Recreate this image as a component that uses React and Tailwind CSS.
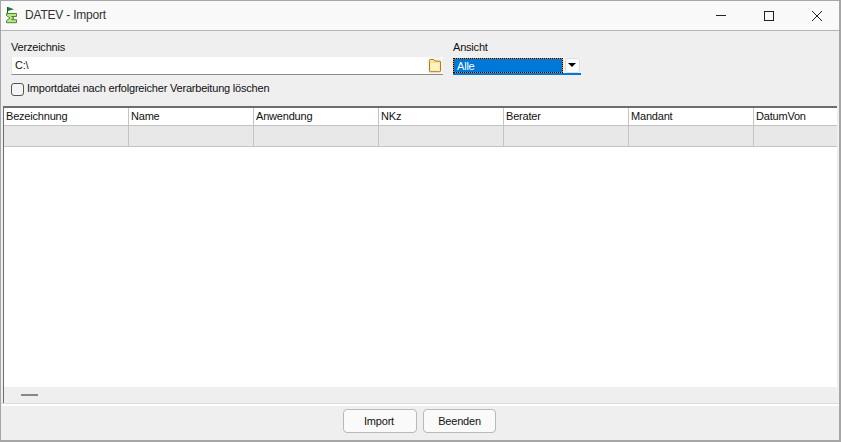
import React from 'react';

const columns = ['Bezeichnung', 'Name', 'Anwendung', 'NKz', 'Berater', 'Mandant', 'DatumVon'];

function AppIcon() {
  return (
    <svg width="16" height="20" viewBox="0 0 16 20" className="shrink-0">
      <path d="M3.5 1v6" stroke="#1c5a2a" strokeWidth="1" />
      <path d="M4 1l6 2.2L4 5z" fill="#1d7a35" />
      <path d="M2.5 7.5h10v3h-5l2.5 1.6-2.5 1.6h5v3h-10v-2l3.5-2.6-3.5-2.6z" fill="#b4ec7c" stroke="#55803f" strokeWidth="1" />
    </svg>
  );
}

function FolderIcon() {
  return (
    <svg width="14" height="15" viewBox="0 0 14 15">
      <path d="M1.5 3.5V2.3c0-.5.3-.8.8-.8h3.4l1.3 1.6h4.7c.5 0 .8.3.8.8v9c0 .5-.3.8-.8.8H2.3c-.5 0-.8-.3-.8-.8z" fill="#f8e391" stroke="#a98016" strokeWidth="1" />
      <path d="M2.5 5h9v7.5h-9z" fill="#fff3c4" />
    </svg>
  );
}

export default function App() {
  return (
    <div className="w-[841px] h-[442px] flex flex-col bg-[#efefef] border border-[#a6a6a6] border-r-2 border-b-2 text-[11px] tracking-[-0.2px] text-[#111] font-['Liberation_Sans',sans-serif] overflow-hidden">
      <div className="h-[30px] shrink-0 flex items-center bg-[#f9f9f9] border-b border-[#b5b5b5]">
        <div className="pl-[3px] w-[24px]">
          <AppIcon />
        </div>
        <span className="text-[12px] leading-[14px] tracking-[-0.2px] text-[#333] -mt-[1px]">DATEV - Import</span>
        <div className="ml-auto flex items-center gap-[38px] pr-[17px] h-full">
          <div className="w-[10px] h-px bg-[#222]" />
          <div className="w-[10px] h-[10px] border border-[#222]" />
          <svg width="10" height="10" viewBox="0 0 10 10">
            <path d="M0 0l10 10M10 0L0 10" stroke="#222" strokeWidth="1" />
          </svg>
        </div>
      </div>

      <div className="h-[75px] shrink-0 flex pl-[10px] pt-[9px]">
        <div className="w-[442px] flex flex-col">
          <div className="h-[16px] leading-[14px]">Verzeichnis</div>
          <div className="h-[18px] w-[432px] mt-[1px] flex items-center bg-white border-l border-[#e6e6e6] border-b-[#8c8c8c] border-b pl-[3px]">
            <span>C:\</span>
            <div className="ml-auto h-full w-[16px] flex items-center justify-center bg-[#f4f4f4] rounded-[3px]">
              <FolderIcon />
            </div>
          </div>
          <label className="flex items-center mt-[6px] h-[16px]">
            <span className="w-[13px] h-[13px] rounded-[3px] border border-[#555] bg-[#f4f4f4] mr-[3px]" />
            <span className="-mt-[1px]">Importdatei nach erfolgreicher Verarbeitung löschen</span>
          </label>
        </div>
        <div className="w-[128px] flex flex-col">
          <div className="h-[16px] leading-[14px]">Ansicht</div>
          <div className="h-[18px] mt-[1px] flex items-end bg-[#f2f2f2] border-b-2 border-[#0078d7]">
            <div className="w-[110px] h-[15px] bg-[#e08a1a] border border-dotted border-black">
              <div className="h-full bg-[#0078d7] text-white leading-[14px] pl-[3px]">Alle</div>
            </div>
            <div className="flex-1 flex items-center justify-center h-full">
              <div className="w-[15px] h-[15px] rounded-[3px] bg-white border border-[#ddd] flex items-center justify-center">
                <svg width="8" height="4" viewBox="0 0 8 4">
                  <path d="M0 0h8L4 4z" fill="#000" />
                </svg>
              </div>
            </div>
          </div>
        </div>
      </div>

      <div className="flex-1 min-h-0 flex flex-col ml-[2px] mr-[2px] bg-white border-t-2 border-l border-[#6d6d6d]">
        <div className="flex h-[18px] shrink-0 border-b border-[#c4c4c4] overflow-hidden">
          {columns.map((col) => (
            <div key={col} className="w-[125px] shrink-0 pl-[2px] leading-[17px] border-r border-[#c4c4c4] last:border-r-0">{col}</div>
          ))}
        </div>
        <div className="flex h-[21px] shrink-0 bg-[#e8e8e8] border-b border-[#c4c4c4] overflow-hidden">
          {columns.map((col) => (
            <div key={col} className="w-[125px] shrink-0 border-r border-[#c4c4c4] last:border-r-0" />
          ))}
        </div>
        <div className="flex-1" />
        <div className="h-[16px] shrink-0 bg-[#efefef] flex items-center pl-[17px]">
          <div className="w-[17px] h-[2px] bg-[#888]" />
        </div>
      </div>

      <div className="h-[37px] shrink-0 border-t border-t-[#dcdcdc]">
        <div className="w-full flex flex-col items-center">
          <div className="h-[2px] w-full bg-white" />
          <div className="flex gap-[6px] pt-[3px] -ml-[1px]">
            <button className="w-[74px] h-[24px] rounded-[4px] border border-[#b9b9b9] bg-[#fafafa] pr-[2px]">Import</button>
            <button className="w-[73px] h-[24px] rounded-[4px] border border-[#b9b9b9] bg-[#fafafa]">Beenden</button>
          </div>
        </div>
      </div>
    </div>
  );
}
